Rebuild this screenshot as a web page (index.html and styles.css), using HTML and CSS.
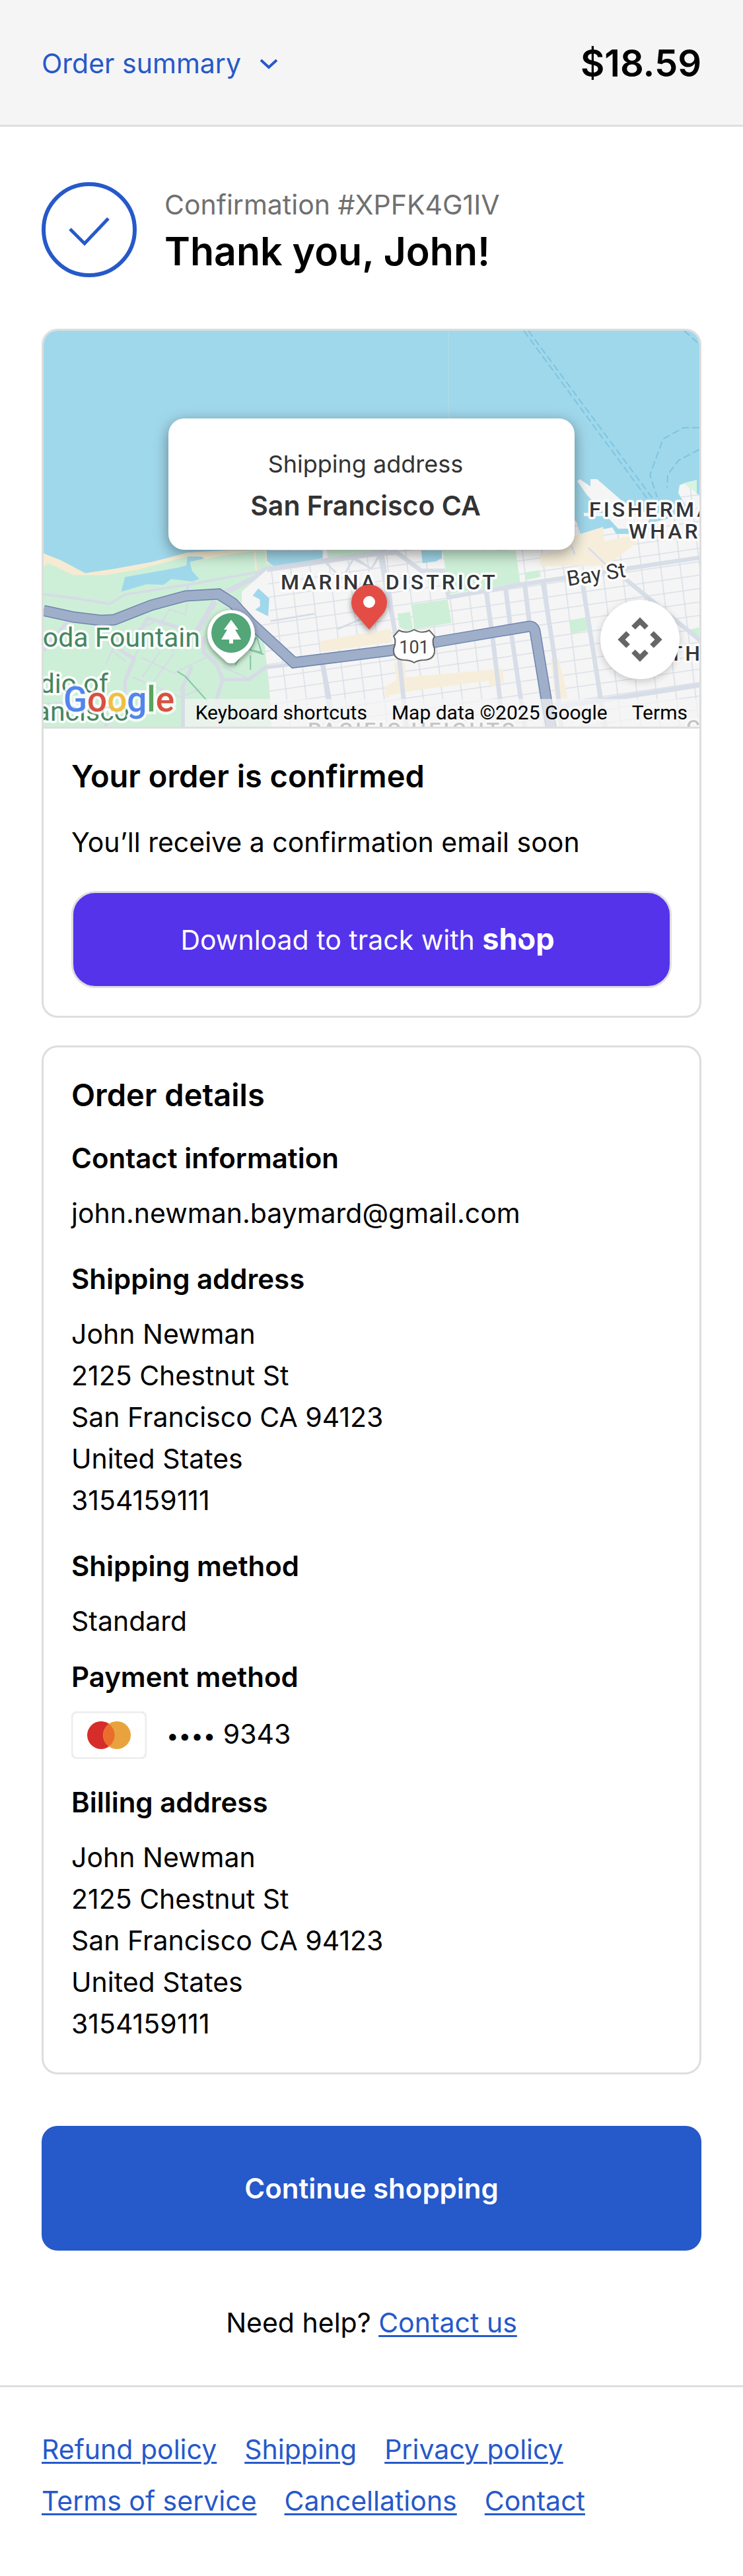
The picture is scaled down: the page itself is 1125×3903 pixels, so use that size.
FILE: index.html
```html
<!DOCTYPE html>
<html lang="en">
<head>
  <meta charset="UTF-8">
  <meta name="viewport" content="width=device-width, initial-scale=1">
  <title>Thank you, John!</title>
  <link rel="stylesheet" href="styles.css">
</head>
<body>
  <header class="summary-bar">
    <button type="button" class="summary-toggle">
      Order summary
      <svg width="28" height="17" viewBox="0 0 28 17"><path d="M2 3l12 11L26 3" fill="none" stroke="currentColor" stroke-width="4"/></svg>
    </button>
    <strong class="total">$18.59</strong>
  </header>

  <main>
    <div class="thanks">
      <svg class="check" width="144" height="144" viewBox="0 0 144 144" fill="none" stroke="currentColor">
        <circle cx="72" cy="72" r="69" stroke-width="6"/>
        <path d="M43 71l22 22 36-38" stroke-width="5"/>
      </svg>
      <div>
        <p class="confirmation">Confirmation #XPFK4G1IV</p>
        <h1>Thank you, John!</h1>
      </div>
    </div>

    <section class="card">
      <div class="map">
        <svg class="map-art" viewBox="0 0 993 600" preserveAspectRatio="xMidYMid slice">
          <defs>
            <pattern id="blocks" width="29" height="20" patternUnits="userSpaceOnUse" patternTransform="matrix(1 -.145 .12 1 6 4)">
              <path d="M0 0h29M0 0v20" fill="none" stroke="#d9dfe7" stroke-width="3"/>
            </pattern>
            <filter id="soft" x="-50%" y="-50%" width="200%" height="200%">
              <feDropShadow dx="0" dy="3" stdDeviation="4" flood-opacity=".45"/>
            </filter>
          </defs>
          <rect width="993" height="600" fill="#f5f5f5"/>
          <rect width="993" height="600" fill="url(#blocks)"/>

          <!-- bay -->
          <path d="M0 0h993v250l-20-20-10 4-2 12 12 20-24 18-50 12-14 12h-18l-6-10-48 10-6-18-10-10-100 30-480 30L219 336l-57 16-54 9-45 8-38-17L0 337z" fill="#a0d8eb"/>
          <path d="M808 228l4-3 16 11v-11h10l38 33 44 22-10 20h-40l-48-52zM818 276h42v5h-42z" fill="#f5f5f5"/>
          <path d="M969 231l20-5v20l-12-8z" fill="#d8f4df"/>
          <path d="M613 0v134" stroke="#b5dce9"/>
          <g fill="none" stroke="#7cc4e0" stroke-width="2" stroke-dasharray="11 5">
            <path d="M727 0l188 256M734 0l188 254M970 0l23 21M993 147h-24l-31 17-20 55 11 33M993 180l-31 16-17 22-1 20"/>
          </g>

          <!-- presidio -->
          <g transform="translate(-16 279) scale(.344 .333)">
            <path d="M46 175l74 30 110 60 130-20 160-30 160-44 190-10 160 0 0 120-984 0z" fill="#f5ebd2"/>
            <path d="M46 0v175l74 30 110 60 130-20 160-30 160-44 160-20V0z" fill="#a0d8eb"/>
            <path d="M46 235l24-13 110 53h140l140-25 220-60 20 25 160-35 115-15 45 0 10 50 30 25 240-42v-38h260l-130 18-420 72-25 40-65 60-2 70 42 50 45 30 15 100 20 180 10 184H46z" fill="#cdefd7"/>
            <path d="M975 165l8 90M1025 165l5 60" stroke="#f5ebd2" stroke-width="8"/>
            <path d="M1028 162h247v36l-215 37-30-25z" fill="#a0d8eb"/>
            <path d="M405 283l235-43 35-10 5-40h60l15 10-65 15 10 40 32 37-32 11-92-11-33 26-75-2-112 34z" fill="#a0d8eb"/>
            <g fill="none" stroke="#d6dce6" stroke-linejoin="round">
              <path d="M46 362l120 15 172 28 66-42 276-45 160-30 160-30" stroke-width="12"/>
              <path d="M830 360l150-75 40-35 540-82" stroke-width="24"/>
              <path d="M680 318v50M800 395l-100 165" stroke-width="12"/>
              <path d="M800 395l-90 155M1530 170l38 225" stroke-width="26"/>
              <path d="M445 580l60-110 160 50M330 580l115 75-40 100 0 100-90 109M750 555v70l60 60 25 65-25 80 15 134M835 750h115l70-55 120-15M650 800l50-110M660 790v174M46 620l110-140" stroke-width="17"/>
              <path d="M390 520l-70 160M460 520l70-30M600 430l-70 130 90 60M350 620l60 50M480 580l-60 120M560 620l-80 120M620 630l-90 130M440 740l210 90 90-40M480 650l140 70 140-70M830 690l130 60M600 430l70 25 10-60M46 860l150-10" stroke-width="7"/>
              <path d="M1275 680l28 160 10 124" stroke-width="22"/>
              <path d="M1290 220l70 70 50-90 80 45 30-50M1010 490l230-40M1340 520l180-80" stroke-width="8"/>
            </g>
            <path d="M918 420l2-70 65-60 45-40 15 240-40 10-45-30z" fill="#f5f5f5"/>
            <path d="M992 335l48 45-5 82-57-30 22-17-2-30-31-17z" fill="#a0d8eb"/>
            <path d="M635 713l35 22 95 110M890 685l60-105M957 640v65M940 610l75 25M985 555l20 70-50-10 30-60-50 50" fill="none" stroke="#84c7a7" stroke-width="6"/>
            <path d="M1260 575l308-55v60l-300 45zM1550 780h18v50h-18z" fill="#f6eedb"/>
          </g>

          <!-- marina and russian hill -->
          <g transform="translate(474 279) scale(.344 .333)">
            <path d="M375 162h325l20 148-320 50-15-160zM243 408l157-23 18 107-163 28zM180 450l55-8 13 78-33 5-27-15zM740 262l65-10 5 30-65 15zM935 482l75-17 5 60-70 17zM1455 525l52-13v68z" fill="#cdefd7"/>
            <path d="M0 545l150-25 5 60-155 20zM130 780l45-30-10-80h45l5 70 425-40 10 60-60 25-10-30-360 50-90 20zM960 95l125-40 5 65 150-30-10 40-130 100-290 5-5-55 75-15zM855 655h35l40 180h-55z" fill="#f6eedb"/>
            <path d="M284 162h91v33l-25 17-60 8z" fill="#a0d8eb"/>
            <g fill="none" stroke="#d8dee8">
              <path d="M105 180l60 330 20 120 35 334M175 170l110 85h95l25 120 320-58 785-122M570 350l30 220 45 394M655 335l25 200 60 429M740 320l20 170M820 310l50 330 30 324M995 320l80 520 20 124M1180 290l330 280" stroke-width="20"/>
              <path d="M840 880l230-35 440-70M0 185l180-15" stroke-width="22"/>
              <path d="M1020 150l90 90M960 180l-15-40M0 200l65 45 35-65" stroke-width="8"/>
            </g>
          </g>

          <!-- 101 -->
          <path d="M0 424l46 10 41 5 20-1 56-22 52-14 50-3 22 14 27 30 65 60 143-18 71-13 142-24q7 0 9 7l25 150" fill="none" stroke="#6f84ad" stroke-width="17"/>
          <path d="M0 424l46 10 41 5 20-1 56-22 52-14 50-3 22 14 27 30 65 60 143-18 71-13 142-24q7 0 9 7l25 150" fill="none" stroke="#9fafca" stroke-width="14"/>

          <g class="place">
            <text x="359" y="392">MARINA DISTRICT</text>
            <text x="826" y="282">FISHERMAN'S</text>
            <text x="886" y="315">WHARF</text>
            <text x="872" y="500">NORTH</text>
            <g class="faded">
              <text x="400" y="616">PACIFIC HEIGHTS</text>
              <text x="973" y="612">CHINATOWN</text>
            </g>
          </g>
          <text class="street" x="794" y="387" transform="rotate(-9 794 387)">Bay St</text>
          <g class="park">
            <text x="237" y="479">Soda Fountain</text>
            <text x="98" y="549">Presidio of</text>
            <text x="130" y="591">San Francisco</text>
          </g>

          <g filter="url(#soft)">
            <path d="M284 504q-6 0-10-5l-17-16a36 36 0 1 1 54 0l-17 16q-4 5-10 5z" fill="#fff"/>
            <circle cx="284" cy="458" r="30" fill="#52a677"/>
          </g>
          <path d="M284 438l11 15h-5l9 15h-12v6h-6v-6h-12l9-15h-5z" fill="#fff"/>

          <path d="M530 463l8-9q11 6 23-1 12 7 23 1l8 9q-5 7 0 19 1 16-15 17-10 0-16 4-6-4-16-4-16-1-15-17 5-12 0-19z" fill="#fff" stroke="#666" stroke-width="2"/>
          <text class="shield" x="561" y="489">101</text>

          <g filter="url(#soft)">
            <path d="M493 453l-20-23a27 27 0 1 1 40 0z" fill="#e34d44"/>
          </g>
          <circle cx="493" cy="411" r="9" fill="#fff"/>
        </svg>

        <div class="map-popup">
          <span>Shipping address</span>
          <b>San Francisco CA</b>
        </div>
        <button type="button" class="map-camera" aria-label="Map camera controls">
          <svg width="120" height="120" viewBox="0 0 120 120"><path d="M50 42l10-10 10 10M50 78l10 10 10-10M42 50L32 60l10 10M78 50l10 10-10 10" fill="none" stroke="#666" stroke-width="8"/></svg>
        </button>
        <a class="google" href="#" aria-label="Google"><span class="g-blue">G</span><span class="g-red">o</span><span class="g-yellow">o</span><span class="g-blue">g</span><span class="g-green">l</span><span class="g-red">e</span></a>
        <div class="map-terms">
          <button type="button">Keyboard shortcuts</button>
          <span>Map data ©2025 Google</span>
          <a href="#">Terms</a>
        </div>
      </div>
      <div class="card-body">
        <h2>Your order is confirmed</h2>
        <p class="note">You’ll receive a confirmation email soon</p>
        <button type="button" class="shop-button">Download to track with <span class="shop">sh<span class="shop-o">o</span>p</span></button>
      </div>
    </section>

    <section class="card card-body details">
      <h2>Order details</h2>
      <h3>Contact information</h3>
      <p>john.newman.baymard@gmail.com</p>
      <h3>Shipping address</h3>
      <address>
        John Newman<br>
        2125 Chestnut St<br>
        San Francisco CA 94123<br>
        United States<br>
        3154159111
      </address>
      <h3>Shipping method</h3>
      <p class="tight">Standard</p>
      <h3>Payment method</h3>
      <div class="payment">
        <svg width="114" height="72" viewBox="0 0 114 72">
          <rect x="1" y="1" width="112" height="70" rx="8" fill="#fff" stroke="#ededed" stroke-width="3"/>
          <circle cx="45" cy="36" r="21" fill="#d62d2b"/>
          <circle cx="69" cy="36" r="21" fill="#e8a33f"/>
          <path d="M57 19a21 21 0 0 1 0 34 21 21 0 0 1 0-34z" fill="#eb6d2b"/>
        </svg>
        <span><span class="dots">••••</span> 9343</span>
      </div>
      <h3>Billing address</h3>
      <address>
        John Newman<br>
        2125 Chestnut St<br>
        San Francisco CA 94123<br>
        United States<br>
        3154159111
      </address>
    </section>

    <button type="button" class="continue">Continue shopping</button>
    <p class="help">Need help? <a href="#">Contact us</a></p>
  </main>

  <footer>
    <a href="#">Refund policy</a>
    <a href="#">Shipping</a>
    <a href="#">Privacy policy</a>
    <a href="#">Terms of service</a>
    <a href="#">Cancellations</a>
    <a href="#">Contact</a>
  </footer>
</body>
</html>
```

FILE: styles.css
```css
* {
  box-sizing: border-box;
}

body {
  margin: 0;
  background: #fff;
  color: #000;
  font-family: Inter, "Liberation Sans", sans-serif;
  font-size: 41px;
  line-height: 63px;
}

h1, h2, h3, p {
  margin: 0;
}

button {
  font: inherit;
  border: 0;
  padding: 0;
  background: none;
  cursor: pointer;
}

a {
  color: #2659c9;
  text-decoration-thickness: 3px;
  text-underline-offset: 4px;
}

.summary-bar {
  display: flex;
  justify-content: space-between;
  align-items: center;
  height: 192px;
  padding: 3px 63px 0;
  background: #f5f5f5;
  border-bottom: 3px solid #dedede;
}

.summary-toggle {
  display: flex;
  align-items: center;
  gap: 28px;
  color: #2659c9;
}

.total {
  font-size: 56px;
  font-weight: 600;
}

main {
  padding: 84px 63px 63px;
}

.thanks {
  display: flex;
  align-items: flex-end;
  gap: 42px;
  margin-bottom: 78px;
}

.check {
  flex: none;
  color: #2659c9;
}

.confirmation {
  color: #707070;
}

h1 {
  font-size: 59px;
  font-weight: 600;
  line-height: 78px;
}

h2 {
  font-size: 47px;
  font-weight: 600;
}

h3 {
  font-size: 42px;
  font-weight: 600;
}

.card {
  border: 3px solid #dedede;
  border-radius: 24px;
  margin-bottom: 42px;
  overflow: hidden;
}

.card-body {
  padding: 40px 42px 42px;
}

/* map */
.map {
  position: relative;
  height: 603px;
  border-bottom: 3px solid #dedede;
  overflow: hidden;
  display: flex;
  justify-content: center;
}

.map-art {
  width: 100%;
  height: 100%;
  font-family: Roboto, sans-serif;
}

.map-art text {
  paint-order: stroke;
  stroke: #fff;
  stroke-width: 7px;
  stroke-linejoin: round;
}

.place {
  font-size: 32px;
  font-weight: 500;
  letter-spacing: 4px;
  fill: #333539;
}

.faded {
  fill: #555;
}

.street {
  font-size: 32px;
  fill: #333;
}

.park {
  font-size: 41px;
  fill: #45875f;
  text-anchor: end;
}

.map-art .shield {
  font-size: 27px;
  fill: #444;
  stroke: none;
  text-anchor: middle;
}

.map-popup {
  position: absolute;
  top: 133px;
  width: 615px;
  height: 199px;
  padding: 3px 18px 0 0;
  display: flex;
  flex-direction: column;
  align-items: center;
  justify-content: center;
  background: #fff;
  border-radius: 24px;
  box-shadow: 0 6px 22px rgba(0, 0, 0, .4);
  color: #333;
}

.map-popup span {
  font-size: 36px;
}

.map-popup b {
  font-size: 41px;
  font-weight: 600;
}

.map-camera {
  position: absolute;
  right: 30px;
  bottom: 72px;
  width: 120px;
  height: 120px;
  border-radius: 50%;
  background: #fff;
  box-shadow: 0 3px 12px rgba(0, 0, 0, .2);
}

.google {
  position: absolute;
  left: 30px;
  bottom: 9px;
  font-family: Roboto, sans-serif;
  font-size: 53px;
  font-weight: 500;
  text-decoration: none;
  -webkit-text-stroke: 8px rgba(255, 255, 255, .8);
  paint-order: stroke;
}

.g-blue { color: #5384ee; }
.g-red { color: #d85140; }
.g-yellow { color: #f1be42; }
.g-green { color: #58a55c; }

.map-terms {
  position: absolute;
  right: 0;
  bottom: 0;
  display: flex;
  gap: 37px;
  padding: 0 18px 0 16px;
  background: rgba(245, 245, 245, .7);
  color: #000;
  font-family: Roboto, sans-serif;
  font-size: 30px;
  line-height: 42px;
}

.map-terms a {
  color: #000;
  text-decoration: none;
}

.note {
  margin: 38px 0 42px;
}

.shop-button {
  display: block;
  width: 100%;
  height: 147px;
  border: 3px solid #dedede;
  border-radius: 36px;
  background: #5433eb;
  color: #fff;
}

.shop {
  margin-right: 12px;
  font-size: 45px;
  font-weight: 700;
}

.shop-o {
  position: relative;
}

/* notch in the o */
.shop-o::before {
  content: "";
  position: absolute;
  left: 0;
  top: 24px;
  width: 13px;
  height: 4px;
  background: #5433eb;
  transform: rotate(40deg);
}

.details h2 {
  margin-bottom: 33px;
}

.details h3 {
  margin-bottom: 21px;
}

.details p {
  margin-bottom: 36px;
}

.details p.tight {
  margin-bottom: 21px;
}

address {
  font-style: normal;
}

address + h3 {
  margin-top: 36px;
}

.payment {
  display: flex;
  align-items: center;
  gap: 30px;
  margin-bottom: 34px;
}

.dots {
  font-size: 33px;
}

.continue {
  display: block;
  width: 100%;
  height: 189px;
  margin: 78px 0;
  border-radius: 24px;
  background: #2659c9;
  color: #fff;
  font-size: 42px;
  font-weight: 600;
}

.help {
  text-align: center;
}

footer {
  display: flex;
  flex-wrap: wrap;
  gap: 15px 42px;
  padding: 63px 63px 84px;
  border-top: 3px solid #dedede;
}
```
